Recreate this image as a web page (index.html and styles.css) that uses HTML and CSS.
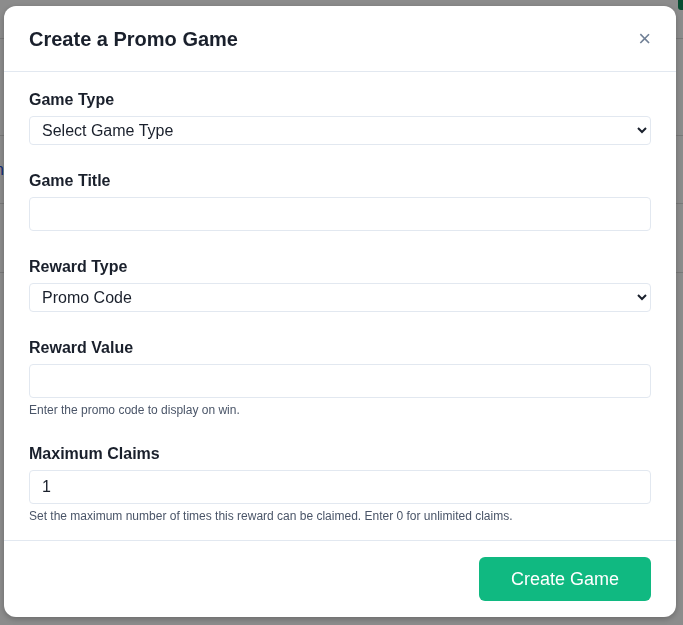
FILE: index.html
```html
<!DOCTYPE html>
<html lang="en">
<head>
<meta charset="utf-8">
<title>Create a Promo Game</title>
<link rel="stylesheet" href="styles.css">
</head>
<body>
<div class="page">
  <div class="page-row row-top"><span class="page-btn"></span></div>
  <div class="page-row row-a"></div>
  <div class="page-row row-b"><span class="page-link">Admin</span></div>
  <div class="page-row row-c"></div>
</div>
<div class="overlay">
  <div class="modal">
    <div class="modal-header">
      <h2 class="modal-title">Create a Promo Game</h2>
      <button class="modal-close" type="button">&times;</button>
    </div>
    <div class="modal-body">
      <div class="form-group">
        <label class="form-label">Game Type</label>
        <select class="form-select"><option>Select Game Type</option></select>
      </div>
      <div class="form-group">
        <label class="form-label">Game Title</label>
        <input class="form-input" type="text" value="">
      </div>
      <div class="form-group">
        <label class="form-label">Reward Type</label>
        <select class="form-select"><option>Promo Code</option></select>
      </div>
      <div class="form-group">
        <label class="form-label">Reward Value</label>
        <input class="form-input" type="text" value="">
        <div class="form-help">Enter the promo code to display on win.</div>
      </div>
      <div class="form-group">
        <label class="form-label">Maximum Claims</label>
        <input class="form-input" type="text" value="1">
        <div class="form-help">Set the maximum number of times this reward can be claimed. Enter 0 for unlimited claims.</div>
      </div>
    </div>
    <div class="modal-footer">
      <button class="btn-primary" type="button">Create Game</button>
    </div>
  </div>
</div>
</body>
</html>
```

FILE: styles.css
```css
* { box-sizing: border-box; }
html, body { margin: 0; padding: 0; }
body {
  font-family: "Liberation Sans", Arial, sans-serif;
  background: #ffffff;
  width: 683px;
  height: 625px;
  overflow: hidden;
}
.page { width: 100%; }
.page-row { border-bottom: 1px solid #dcdcdc; }
.row-top { height: 39px; display: flex; justify-content: flex-end; }
.page-btn {
  width: 5px; height: 10px;
  background: #0f8a5a;
  border-bottom-left-radius: 3px;
}
.row-a { height: 97px; }
.row-b { height: 68px; display: flex; align-items: center; }
.page-link {
  display: block;
  width: 4px;
  overflow: hidden;
  direction: rtl;
  white-space: nowrap;
  color: #1d4ed8;
  font-size: 16px;
}
.row-c { height: 69px; }

.overlay {
  position: fixed;
  inset: 0;
  background: rgba(0, 0, 0, 0.45);
  padding: 6px 7px 8px 4px;
}
.modal {
  width: 672px;
  height: 611px;
  background: #ffffff;
  border-radius: 12px;
  box-shadow: 0 2px 6px rgba(0, 0, 0, 0.25);
  display: flex;
  flex-direction: column;
  overflow: hidden;
}
.modal-header {
  display: flex;
  align-items: center;
  justify-content: space-between;
  padding: 21px 25px 20px 25px;
  border-bottom: 1px solid #e2e8f0;
}
.modal-title {
  margin: 0;
  font-size: 20px;
  line-height: 24px;
  font-weight: 700;
  color: #1a202c;
}
.modal-close {
  border: 0;
  background: transparent;
  padding: 0;
  margin-right: 0;
  font-family: "Liberation Sans", Arial, sans-serif;
  font-size: 22px;
  line-height: 22px;
  color: #718096;
}
.modal-body {
  flex: 1;
  padding: 17px 25px 16px 25px;
}
.form-group { margin-bottom: 25px; }
.form-group:last-child { margin-bottom: 0; }
.form-label {
  display: block;
  font-size: 16px;
  line-height: 20px;
  font-weight: 700;
  color: #1a202c;
  padding-top: 1px;
  margin-bottom: 6px;
}
.form-select {
  display: block;
  width: 100%;
  height: 29px;
  border: 1px solid #e2e8f0;
  border-radius: 4px;
  background: #ffffff;
  font-family: "Liberation Sans", Arial, sans-serif;
  font-size: 16px;
  color: #1a202c;
  padding: 0 6px 0 8px;
}
.form-input {
  display: block;
  width: 100%;
  height: 34px;
  border: 1px solid #e2e8f0;
  border-radius: 4px;
  background: #ffffff;
  font-family: "Liberation Sans", Arial, sans-serif;
  font-size: 16px;
  color: #1a202c;
  padding: 0 12px;
}
.form-help {
  margin-top: 4px;
  font-size: 12px;
  line-height: 16px;
  color: #4a5568;
}
.modal-footer {
  display: flex;
  justify-content: flex-end;
  padding: 16px 25px;
  border-top: 1px solid #e2e8f0;
}
.btn-primary {
  height: 44px;
  width: 172px;
  border: 0;
  border-radius: 6px;
  background: #10b981;
  color: #ffffff;
  font-family: "Liberation Sans", Arial, sans-serif;
  font-size: 18px;
}
```
